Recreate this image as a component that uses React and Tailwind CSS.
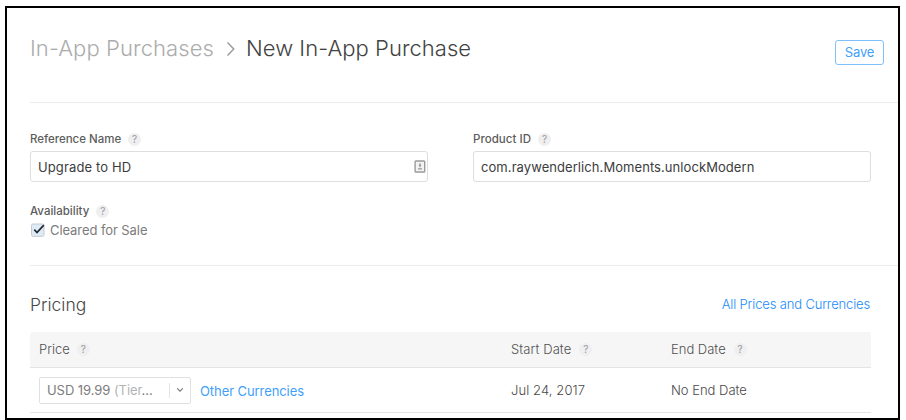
import React from "react";

function Help() {
  return (
    <span className="flex h-[13px] w-[13px] shrink-0 items-center justify-center rounded-full bg-[#efeff1] text-[10px] leading-[13px] font-normal tracking-normal text-[#98989c]">
      ?
    </span>
  );
}

function Field({ label, value, labelClass, valueClass, children }) {
  return (
    <div className="w-[398px]">
      <div className="flex h-[14px] items-center gap-[7px] text-[11.5px] font-medium text-[#5c5c5c]">
        <span className={labelClass}>{label}</span>
        <Help />
      </div>
      <div className="mt-[5px] flex h-[31px] items-center justify-between rounded-[3px] border border-[#dedede] pt-[2px] pr-[1px] pl-[7px] text-[13px] text-[#3c3c3c]">
        <span className={valueClass}>{value}</span>
        {children}
      </div>
    </div>
  );
}

function ContactIcon() {
  return (
    <svg className="mb-[2px]" width="12" height="13" viewBox="0 0 12 13" fill="none">
      <rect x="1.1" y="1" width="9.6" height="11" rx="0.8" fill="#f4f4f4" stroke="#9a9a9a" strokeWidth="1.4" />
      <path d="M6 3.2v4M4.8 5.4h2.4M3.9 8.8h4.2" stroke="#979797" strokeWidth="1.2" />
    </svg>
  );
}

export default function App() {
  return (
    <div className="h-[420px] w-[906px] overflow-hidden bg-white pt-[6px] pl-[5px] font-['Inter',sans-serif]">
      <main className="h-[414px] w-[895px] overflow-hidden border-2 border-black">
        <div className="pl-[23px]">
          <header className="flex h-[95px] justify-between border-b border-[#ececec] pr-[14px]">
            <h1 className="mt-[25px] flex h-[30px] items-center text-[22px] font-light whitespace-nowrap text-[#424242]">
              <span className="w-[184px] tracking-[0.09px] text-[#acacac]">In-App Purchases</span>
              <svg className="mt-[1px] mr-[10px] ml-[12px]" width="10" height="16" viewBox="0 0 10 16" fill="none">
                <path d="M1.5 1.5L7.8 8L1.5 14.5" stroke="#999" strokeWidth="1.4" />
              </svg>
              <span className="tracking-[0.04px]">New In-App Purchase</span>
            </h1>
            <button className="mt-[32px] h-[25px] w-[49px] rounded-[3px] border border-[#7fc0fb] text-[13px] leading-[23px] tracking-[-0.1px] text-[#3f9ffa]">
              Save
            </button>
          </header>

          <section className="h-[163px] border-b border-[#ececec] pt-[29px]">
            <div className="flex gap-[45px]">
              <Field
                label="Reference Name"
                value="Upgrade to HD"
                labelClass="pt-[1px] tracking-[-0.02px]"
                valueClass="tracking-[0.12px]"
              >
                <ContactIcon />
              </Field>
              <Field
                label="Product ID"
                value="com.raywenderlich.Moments.unlockModern"
                labelClass="pt-[1px] tracking-[0.05px]"
                valueClass="tracking-[0.07px]"
              />
            </div>
            <div className="mt-[22px] flex h-[14px] items-center gap-[7px] text-[11.5px] font-medium text-[#5c5c5c]">
              <span className="pt-[1px]">Availability</span>
              <Help />
            </div>
            <label className="mt-[4px] flex h-[16px] items-center gap-[5px] pl-[1px] text-[13px] text-[#7c7c7c]">
              <svg width="14" height="14" viewBox="0 0 14 14" fill="none">
                <rect x="0.5" y="1" width="12.5" height="12.3" rx="1.5" fill="#dfebf7" stroke="#c3c9d0" />
                <path d="M3.3 6.6L6 9.6L12.8 2.2" stroke="#26292d" strokeWidth="1.7" />
              </svg>
              <span className="pt-[1px] tracking-[-0.08px]">Cleared for Sale</span>
            </label>
          </section>

          <section className="w-[841px]">
            <div className="flex h-[66px] items-center justify-between pt-[11px]">
              <h2 className="pt-[1px] text-[17.5px] font-light text-[#484848]">Pricing</h2>
              <a className="pr-[1px] pt-[1px] text-[13px] font-light tracking-[-0.15px] text-[#1a8bfb]">All Prices and Currencies</a>
            </div>
            <div className="grid h-[36px] grid-cols-[472px_160px_1fr] items-center rounded-t-[3px] border-b border-[#e4e4e4] bg-[#f6f6f6] pl-[9px] text-[13px] font-light text-[#505050]">
              <div className="flex items-center gap-[7px]"><span className="pt-[1px]">Price</span><Help /></div>
              <div className="flex items-center gap-[8px]"><span className="pt-[1px] tracking-[0.08px]">Start Date</span><Help /></div>
              <div className="flex items-center gap-[8px]"><span className="pt-[1px]">End Date</span><Help /></div>
            </div>
            <div className="grid h-[45px] grid-cols-[472px_160px_1fr] items-center border-b border-[#e4e4e4] pl-[9px] text-[13px] font-light text-[#484848]">
              <div className="flex items-center">
                <div className="flex h-[27px] w-[152px] items-center rounded-[2px] border border-[#e0e0e0] pl-[7px]">
                  <span className="w-[122px] pt-[1px] font-normal tracking-[-0.06px] whitespace-nowrap text-[#7c7c7c]">
                    USD 19.99 <span className="text-[#b4b4b4]">(Tier</span>...
                  </span>
                  <span className="h-[15px] border-l border-[#e4e4e4]" />
                  <svg className="ml-[6px]" width="8" height="6" viewBox="0 0 8 6" fill="none">
                    <path d="M1.2 1.3L4 4.1L6.8 1.3" stroke="#777" strokeWidth="1.1" />
                  </svg>
                </div>
                <a className="mt-[3px] ml-[9px] font-normal tracking-[-0.08px] text-[#3f9ffa]">Other Currencies</a>
              </div>
              <span className="pt-[2px] tracking-[0.1px]">Jul 24, 2017</span>
              <span className="pt-[2px]">No End Date</span>
            </div>
          </section>
        </div>
      </main>
    </div>
  );
}
